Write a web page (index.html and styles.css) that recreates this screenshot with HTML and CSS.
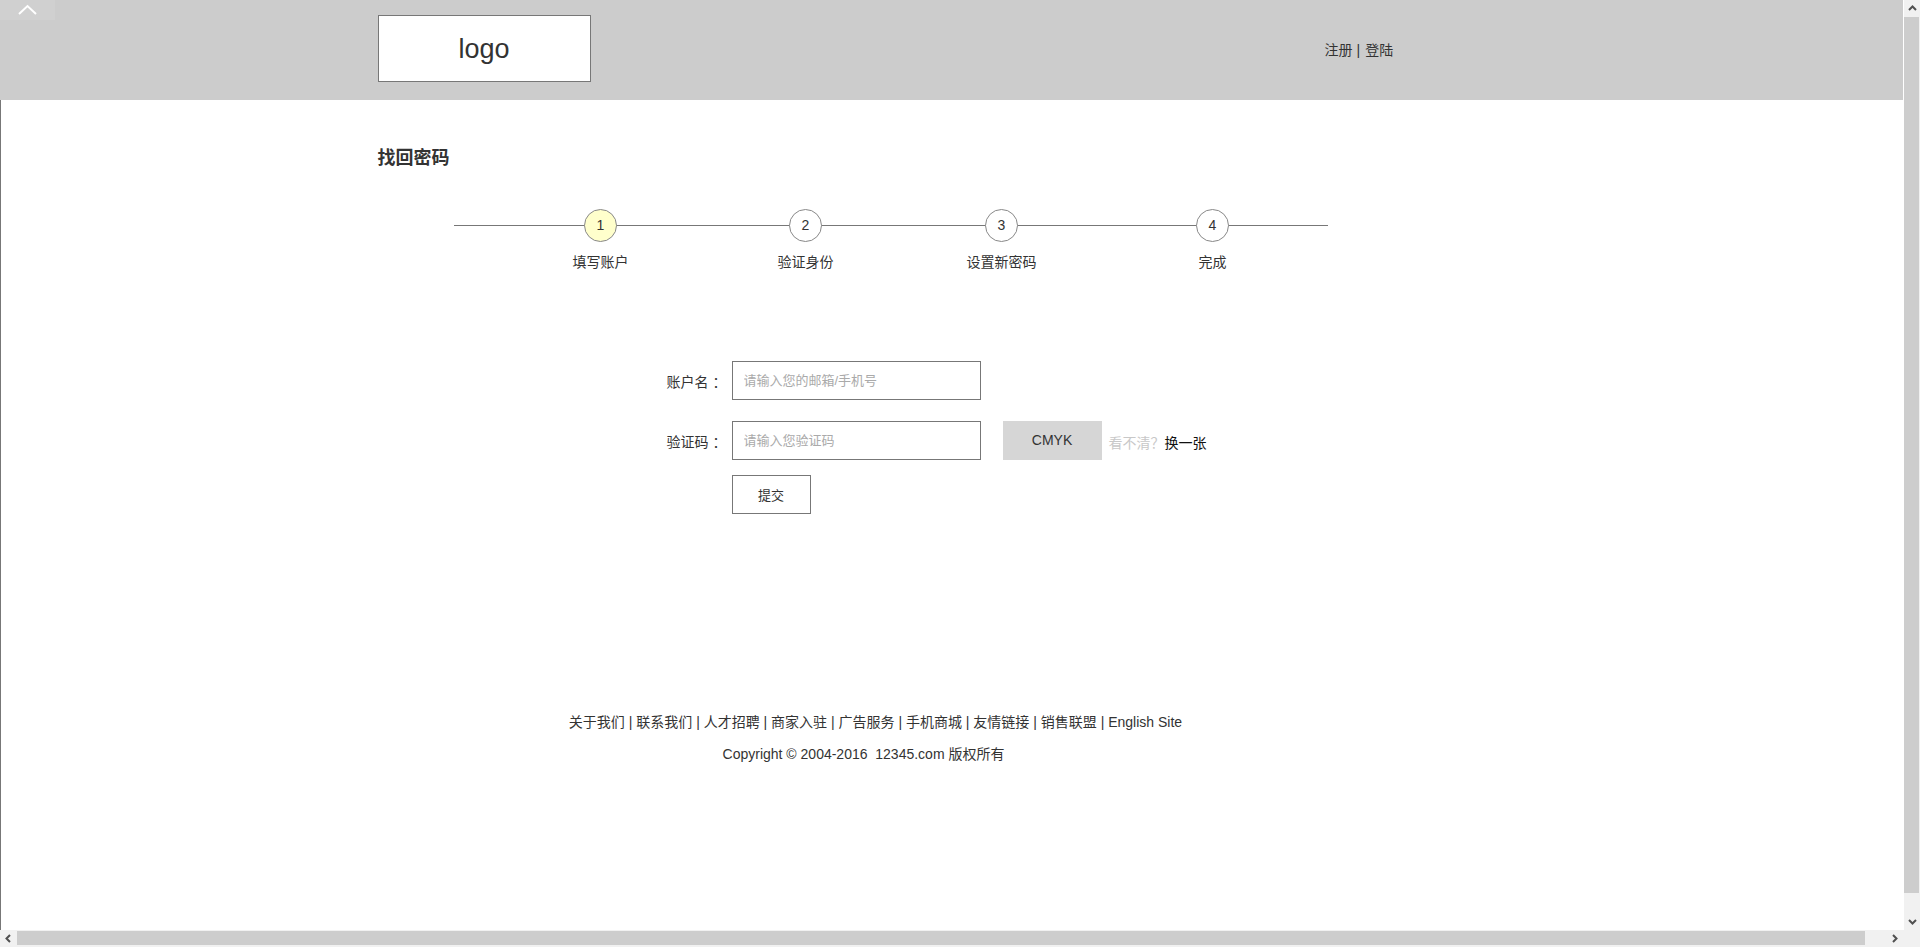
FILE: index.html
```html
<!DOCTYPE html>
<html lang="zh-CN">
<head>
<meta charset="utf-8">
<title>找回密码</title>
<link rel="stylesheet" href="styles.css">
</head>
<body>
<div class="page">
  <a class="back-top" href="#"><svg width="55" height="20" viewBox="0 0 55 20"><polyline points="19,14 27.5,6 36,14" fill="none" stroke="#fff" stroke-width="2"/></svg></a>
  <header class="header">
    <div class="container header-inner">
      <div class="logo">logo</div>
      <div class="user-links"><a href="#">注册</a><span class="sep">|</span><a href="#">登陆</a></div>
    </div>
  </header>
  <main class="main">
    <div class="container">
      <h1 class="title">找回密码</h1>
      <div class="steps">
        <div class="step step-1 active"><span class="num">1</span><span class="label">填写账户</span></div>
        <div class="step step-2"><span class="num">2</span><span class="label">验证身份</span></div>
        <div class="step step-3"><span class="num">3</span><span class="label">设置新密码</span></div>
        <div class="step step-4"><span class="num">4</span><span class="label">完成</span></div>
      </div>
      <form class="form">
        <div class="row row-1">
          <label class="field-label">账户名<span class="punct">：</span></label>
          <input class="field" type="text" placeholder="请输入您的邮箱/手机号">
        </div>
        <div class="row row-2">
          <label class="field-label">验证码<span class="punct">：</span></label>
          <input class="field" type="text" placeholder="请输入您验证码">
          <span class="captcha">CMYK</span>
          <span class="refresh"><span class="hint">看不清<span class="qmark">？</span></span><a href="#">换一张</a></span>
        </div>
        <div class="row row-3">
          <span class="field-label"></span>
          <button class="submit" type="button">提交</button>
        </div>
      </form>
      <footer class="footer">
        <p class="links">关于我们 | 联系我们 | 人才招聘 | 商家入驻 | 广告服务 | 手机商城 | 友情链接 | 销售联盟 | English Site</p>
        <p class="copy">Copyright © 2004-2016&nbsp;&nbsp;12345.com 版权所有</p>
      </footer>
    </div>
  </main>
</div>

<div class="sb sb-v" aria-hidden="true">
  <span class="sb-btn"><svg width="17" height="17" viewBox="0 0 17 17"><polyline points="5,10 8.5,6.5 12,10" fill="none" stroke="#505050" stroke-width="2"/></svg></span>
  <span class="sb-thumb-v"></span>
  <span class="sb-fill"></span>
  <span class="sb-btn"><svg width="17" height="17" viewBox="0 0 17 17"><polyline points="5,7 8.5,10.5 12,7" fill="none" stroke="#505050" stroke-width="2"/></svg></span>
</div>
<div class="sb sb-h" aria-hidden="true">
  <span class="sb-btn"><svg width="17" height="17" viewBox="0 0 17 17"><polyline points="10,5 6.5,8.5 10,12" fill="none" stroke="#505050" stroke-width="2"/></svg></span>
  <span class="sb-thumb-h"></span>
  <span class="sb-fill"></span>
  <span class="sb-btn"><svg width="17" height="17" viewBox="0 0 17 17"><polyline points="7,5 10.5,8.5 7,12" fill="none" stroke="#505050" stroke-width="2"/></svg></span>
</div>
<div class="sb-corner" aria-hidden="true"></div>
</body>
</html>
```

FILE: styles.css
```css
html, body {
  margin: 0;
  padding: 0;
}
body {
  font-family: "Liberation Sans", "Noto Sans CJK SC", sans-serif;
  color: #333;
  font-size: 14px;
  background: #fff;
}
a {
  color: inherit;
  text-decoration: none;
}
.page {
  width: 1925px;
  position: relative;
}
.back-top {
  position: absolute;
  left: 0;
  top: 0;
  width: 55px;
  height: 20px;
  background: #d0d0d0;
  display: block;
}
.back-top svg {
  display: block;
}
.container {
  width: 1170px;
  margin: 0 auto;
}
.header {
  background: #ccc;
  height: 100px;
}
.header-inner {
  display: flex;
  align-items: center;
  height: 100px;
}
.logo {
  box-sizing: border-box;
  width: 213px;
  height: 67px;
  margin-top: -4px;
  padding-top: 3px;
  border: 1px solid #777;
  background: #fff;
  font-size: 27px;
  line-height: 61px;
  text-align: center;
  color: #333;
}
.user-links {
  margin-left: 734px;
  font-size: 14px;
  line-height: 20px;
  color: #333;
}
.user-links .sep {
  margin: 0 5px 0 4px;
}
.main {
  box-sizing: border-box;
  border-left: 1px solid #777;
  border-right: 1px solid #777;
  height: 851px;
}
.title {
  margin: 0;
  padding-top: 46px;
  font-size: 18px;
  line-height: 24px;
  font-weight: bold;
  color: #333;
}
.steps {
  display: flex;
  width: 874px;
  margin: 39px 0 0 76px;
  background: linear-gradient(#777, #777) no-repeat 0 16px / 100% 1px;
}
.step {
  width: 100px;
  display: flex;
  flex-direction: column;
  align-items: center;
}
.step-1 { margin-left: 97px; }
.step-2 { margin-left: 105px; }
.step-3 { margin-left: 96px; }
.step-4 { margin-left: 111px; }
.num {
  box-sizing: border-box;
  width: 33px;
  height: 33px;
  border: 1px solid #888;
  border-radius: 50%;
  background: #fff;
  text-align: center;
  line-height: 31px;
  font-size: 14px;
  color: #333;
}
.step.active .num {
  background: #ffffcc;
}
.label {
  margin-top: 10px;
  line-height: 20px;
  font-size: 14px;
  white-space: nowrap;
}
.punct, .qmark {
  font-family: "Noto Sans CJK JP", sans-serif;
}
.field-label .punct {
  margin-left: 4px;
  margin-right: -5px;
}
.form {
  margin-top: 89px;
  padding-left: 272px;
}
.row {
  display: flex;
  align-items: center;
  height: 39px;
}
.row-2 { margin-top: 21px; }
.row-3 { margin-top: 15px; }
.field-label {
  width: 72px;
  margin-right: 10px;
  text-align: right;
  font-size: 14px;
  line-height: 20px;
  padding-top: 2px;
}
.field {
  box-sizing: border-box;
  width: 249px;
  height: 39px;
  border: 1px solid #777;
  padding: 0 11px;
  font-family: inherit;
  font-size: 13px;
  color: #333;
  outline: none;
  margin: 0;
}
.field::placeholder {
  color: #aaa;
}
.captcha {
  margin-left: 22px;
  width: 99px;
  height: 39px;
  background: #d6d6d6;
  text-align: center;
  line-height: 39px;
  font-size: 14px;
  color: #333;
}
.refresh {
  margin-left: 7px;
  padding-top: 3px;
  font-size: 14px;
  line-height: 20px;
}
.hint {
  color: #c8c8c8;
}
.refresh a {
  color: #111;
}
.submit {
  box-sizing: border-box;
  width: 79px;
  height: 39px;
  border: 1px solid #777;
  background: #fff;
  font-family: inherit;
  font-size: 13px;
  color: #333;
  padding: 0;
  margin: 0;
}
.footer {
  width: 992px;
  margin-top: 198px;
  text-align: center;
  font-size: 14px;
  color: #333;
}
.footer p {
  margin: 0;
  line-height: 20px;
}
.footer .links {
  padding-left: 4px;
}
.footer .copy {
  margin-top: 12px;
  padding-left: 4px;
  padding-right: 24px;
}

/* browser-style scrollbars drawn over the page edges */
.sb {
  position: fixed;
  display: flex;
  background: #f1f1f1;
  z-index: 10;
}
.sb-v {
  top: 0;
  right: 0;
  width: 17px;
  height: 930px;
  flex-direction: column;
  border-left: 1px solid #fff;
  box-sizing: border-box;
}
.sb-h {
  left: 0;
  bottom: 0;
  width: 1903px;
  height: 17px;
  flex-direction: row;
}
.sb-btn {
  flex: none;
  width: 17px;
  height: 17px;
  display: block;
}
.sb-v .sb-btn {
  width: 16px;
}
.sb-btn svg {
  display: block;
}
.sb-fill {
  flex: 1;
}
.sb-thumb-v {
  flex: none;
  height: 876px;
  margin: 0 1px 0 0;
  background: #cdcdcd;
}
.sb-thumb-h {
  flex: none;
  width: 1848px;
  height: 14px;
  margin-top: 1px;
  background: #cdcdcd;
}
.sb-corner {
  position: fixed;
  right: 0;
  bottom: 0;
  width: 17px;
  height: 17px;
  background: #f1f1f1;
  z-index: 10;
}
```
